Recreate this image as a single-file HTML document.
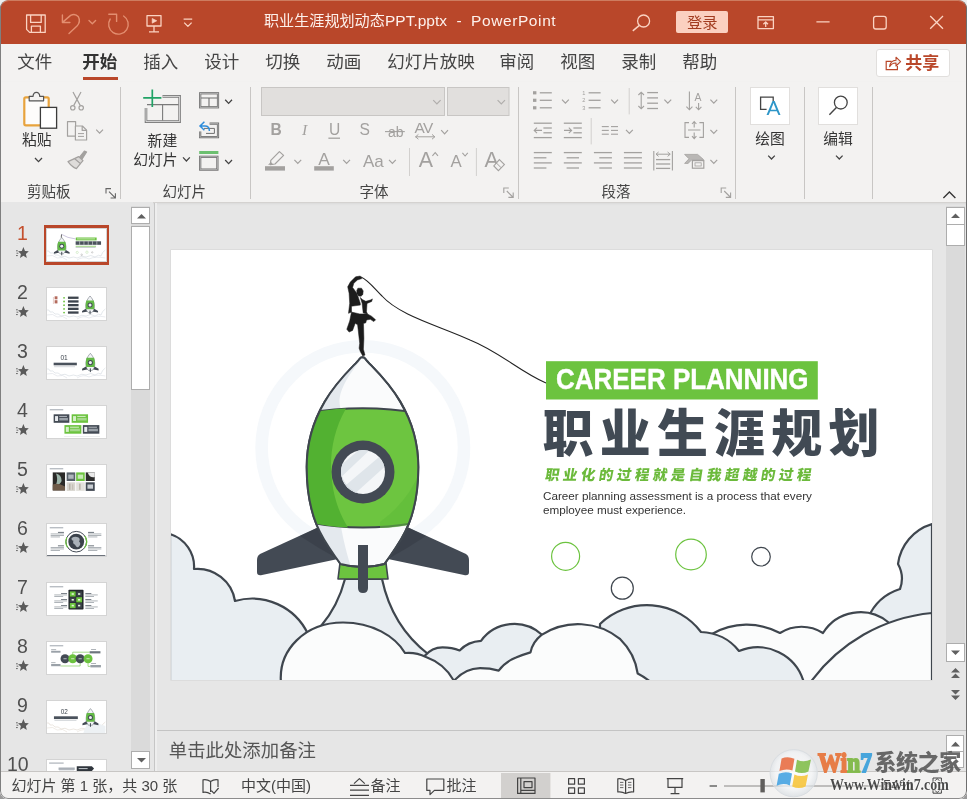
<!DOCTYPE html>
<html lang="zh-CN">
<head>
<meta charset="utf-8">
<title>职业生涯规划动态PPT.pptx - PowerPoint</title>
<style>
*{box-sizing:border-box;margin:0;padding:0}
html,body{width:967px;height:799px;overflow:hidden;background:linear-gradient(#eeeeee 0,#eeeeee 400px,#9a9a9a 400px,#9a9a9a 100%)}
body{font-family:"Liberation Sans","Noto Sans CJK SC",sans-serif;color:#444;position:relative}
#win{position:absolute;left:0;top:0;width:967px;height:799px;overflow:hidden;background:#e6e6e6;border-radius:8px;will-change:transform}
.abs{position:absolute}
.t{position:absolute;white-space:nowrap;line-height:1}
svg{position:absolute;overflow:visible}
/* title bar */
#title{position:absolute;left:0;top:0;width:967px;height:44px;background:#b9472a;border-radius:9px 9px 0 0;box-shadow:inset 0 1px 0 #cd7c60}
#title .t{color:#fdf1ec;font-size:15.5px}
/* tabs */
#tabs{position:absolute;left:0;top:44px;width:967px;height:38px;background:#f3f2f1}
#tabs .t{font-size:17.5px;color:#444;top:9.7px;margin-left:-.7px}
/* ribbon */
#ribbon{position:absolute;left:0;top:82px;width:967px;height:120.5px;background:#f3f2f1;border-bottom:1px solid #d4d2d0;box-shadow:0 1px 2px rgba(0,0,0,.06)}
#ribbon .lbl{font-size:14.5px;color:#444}
.sep{position:absolute;width:1px;background:#c8c6c4}
/* panes */
#thumbs{position:absolute;left:0;top:202px;width:153px;height:569px;background:#e6e6e6}
#status{position:absolute;left:0;top:771px;width:967px;height:28px;background:#f3f2f1;border-top:1px solid #c8c6c4}
#status .t{font-size:15px;color:#444;top:5.8px}
.num{font-size:19.5px;font-family:"Liberation Sans",sans-serif}
.th{width:58.4px;height:32.8px;background:#fff;outline:1px solid #d4d4d4;overflow:hidden}
.sbb{background:#fff;border:1px solid #adadad}
#ribbon .big{font-size:14.8px;color:#333}
</style>
</head>
<body>
<div id="win">

<!-- TITLE BAR -->
<div id="title">
<svg width="967" height="43" viewBox="0 0 967 43" style="left:0;top:0">
<g fill="none" stroke="#fbd3c2" stroke-width="1.3" stroke-linejoin="round">
<path d="M26.6,15 H45.2 V32.4 H29.6 L26.6,29.4 Z"/><path d="M30.6,15 V22.4 H41.2 V15 M31.4,32.4 V26.2 H40.4 V32.4"/>
<path d="M147,15.6 H161 V26 H147 Z M154,26 V31.6 M149,31.8 H159"/><path d="M152.2,18.4 L156.8,20.8 L152.2,23.2 Z" fill="#fbd3c2" stroke-width=".6"/>
<path d="M183.6,19.2 H192.2"/><path d="M184.2,22.6 L187.9,26.4 L191.6,22.6" />
<circle cx="643.6" cy="21" r="6"/><path d="M639.4,25.4 L632.8,30.8" stroke-width="1.5"/>
<rect x="758" y="16.6" width="15.4" height="12"/><path d="M758,19.8 H773.4 M765.7,27 V22 M763.4,24.2 L765.7,22 L768,24.2"/>
<path d="M816.4,21.8 H829.6"/>
<rect x="873.6" y="16.4" width="12.6" height="12.6" rx="2.2"/>
<path d="M930.2,16 L943,28.8 M943,16 L930.2,28.8"/>
</g>
<g fill="none" stroke="#e38e70" stroke-width="1.4" stroke-linecap="round" stroke-linejoin="round">
<path d="M62.4,15 V22.5 H69.9 M62.8,22.1 L70.6,15.4 Q75.2,13 78.4,16.8 Q81,21.4 77,26 L69,33.6"/>
<path d="M89,20.6 L92.3,23.8 L95.6,20.6"/>
<path d="M108.8,14.2 H116.6 V21.4 M123.6,16 A9.8,9.8 0 1 1 110.2,19"/>
</g>
</svg>
  <div class="t" style="left:264px;top:13px;font-size:15.1px">职业生涯规划动态</div>
  <div class="t" style="left:385px;top:13px;font-size:15.5px">PPT.pptx</div>
  <div class="t" style="left:456.6px;top:13px;font-size:15.5px">-</div>
  <div class="t" style="left:471px;top:13px;font-size:15.5px;letter-spacing:.6px">PowerPoint</div>
  <div class="abs" style="left:676px;top:11.4px;width:52.4px;height:22px;background:#fbd0c0;border-radius:2px"></div>
  <div class="t" style="left:687px;top:14.6px;color:#a23c20;font-size:15.3px">登录</div>
</div>

<!-- TABS -->
<div id="tabs">
  <div class="t" style="left:18px">文件</div>
  <div class="t" style="left:83px;font-weight:700;color:#333">开始</div>
  <div class="abs" style="left:82.6px;top:32.7px;width:35.4px;height:3.4px;background:#b9472a"></div>
  <div class="t" style="left:144px">插入</div>
  <div class="t" style="left:205px">设计</div>
  <div class="t" style="left:266px">切换</div>
  <div class="t" style="left:327px">动画</div>
  <div class="t" style="left:388px">幻灯片放映</div>
  <div class="t" style="left:500px">审阅</div>
  <div class="t" style="left:561px">视图</div>
  <div class="t" style="left:622px">录制</div>
  <div class="t" style="left:683px">帮助</div>
  <div class="abs" style="left:875.6px;top:4.6px;width:74.8px;height:28.8px;background:#fff;border:1px solid #e1dfdd;border-radius:3px"></div>
  <svg style="left:884px;top:11px" width="18" height="16" viewBox="884 55 18 16"><path d="M891.6,61.4 H886.2 V69.6 H897.4 V66" fill="none" stroke="#b9472a" stroke-width="1.2"/><path d="M889.6,66.6 Q890.4,60.4 896,60.2 V57.2 L900.6,61.6 L896,66 V63 Q892,62.8 889.6,66.6 Z" fill="#f3f2f1" stroke="#b9472a" stroke-width="1.1" stroke-linejoin="round"/></svg>
  <div class="t" style="left:906px;top:10.8px;font-weight:700;color:#b9472a;font-size:17px">共享</div>
</div>

<!-- RIBBON -->
<div id="ribbon">
<div class="sep" style="left:120px;top:5px;height:112px"></div><div class="sep" style="left:250px;top:5px;height:112px"></div><div class="sep" style="left:518px;top:5px;height:112px"></div><div class="sep" style="left:735px;top:5px;height:112px"></div><div class="sep" style="left:803.5px;top:5px;height:112px"></div><div class="sep" style="left:871.5px;top:5px;height:112px"></div>
<svg id="rbsvg" width="967" height="120" viewBox="0 82 967 120" style="left:0;top:0"><rect x="24.3" y="97.3" width="24.4" height="28" rx="1.5" fill="#fdfcfb" stroke="#e8a33d" stroke-width="2.2"/>
<path d="M29.2,100.8 V96.4 H33 Q33.4,92.4 36.4,92.4 Q39.4,92.4 39.8,96.4 H43.6 V100.8 Z" fill="#f3f2f1" stroke="#555" stroke-width="1.2" stroke-linejoin="round"/>
<rect x="40.4" y="107.4" width="16.2" height="20.8" fill="#fff" stroke="#3b3b3b" stroke-width="1.3"/>
<path d="M35,158 l3.5,3.6 l3.5,-3.6" fill="none" stroke="#444444" stroke-width="1.3"/>
<g fill="none" stroke="#a3a19f" stroke-width="1.2"><path d="M73,92 L80.2,105.4 M81,92 L73.8,105.4"/><circle cx="72.8" cy="107.8" r="2.2"/><circle cx="81.2" cy="107.8" r="2.2"/></g>
<g fill="#f3f2f1" stroke="#a3a19f" stroke-width="1.2" stroke-linejoin="round"><path d="M67.5,121.6 H75.6 V136.2 H67.5 Z"/><path d="M75.4,126 H82.4 L86.6,130.2 V140 H75.4 Z"/><path d="M82.2,126 V130.4 H86.6" fill="none"/><path d="M78,133.6 H84 M78,136.4 H84" fill="none" stroke-width="1"/></g>
<path d="M96.2,129.6 l3.4,3.6 l3.4,-3.6" fill="none" stroke="#a3a19f" stroke-width="1.2"/>
<g fill="none" stroke="#a3a19f" stroke-width="1.2" stroke-linejoin="round"><path d="M86.6,152 L84.4,151 L79.4,157.4 L81.8,159.4 Z" fill="#a3a19f"/><path d="M78.6,156.6 L83,160.6 L80.4,163.6 L74.4,158.6 Z" fill="#d8d6d4"/><path d="M74.4,158.6 L68,161.6 Q72,167 76.4,168.6 L80.4,163.6 Z" fill="#dedcda"/></g>
<path d="M106,193.6 v-5 h5 M109,191.6 l6,6 M115.4,193.2 v4.8 h-4.8" fill="none" stroke="#666" stroke-width="1.1"/>
<g fill="none" stroke="#7a7a7a"><path d="M162.5,96.4 H179.6 V121.6 H146 V108" stroke-width="2.6"/><path d="M162.5,96.4 H179.6 V121.6 H146 V108" stroke="#f3f2f1" stroke-width=".8"/><path d="M147,104.6 H178.6 M162.6,104.6 V120.6" stroke-width="1.1"/></g>
<path d="M143.2,97.8 H161.4 M152.3,89.4 V107" stroke="#21a366" stroke-width="1.7" fill="none"/>
<path d="M183,157.4 l3.4,3.6 l3.4,-3.6" fill="none" stroke="#444444" stroke-width="1.3"/>
<g fill="none" stroke="#6e6e6e"><rect x="200.2" y="93.3" width="17.8" height="14" stroke-width="2.2"/><rect x="200.2" y="93.3" width="17.8" height="14" stroke="#cfcfcf" stroke-width=".6"/><path d="M201,98 H217.4 M209,98 V106.6" stroke-width="1.1"/></g>
<path d="M225.2,99.8 l3.4,3.6 l3.4,-3.6" fill="none" stroke="#444444" stroke-width="1.3"/>
<g fill="none" stroke="#6e6e6e"><path d="M209.6,123.6 H218 V137.2 H200.2 V131.6" stroke-width="2.2"/><path d="M209.6,123.6 H218 V137.2 H200.2 V131.6" stroke="#cfcfcf" stroke-width=".6"/><path d="M204,128.4 H214.4 V133.4 H206" stroke-width="1"/></g>
<path d="M204.4,121.8 L200,126 L204.4,130.2 M200.4,126 H205 Q209.4,126 209.4,131" fill="none" stroke="#2e8ddb" stroke-width="1.5"/>
<rect x="199.2" y="151" width="19.2" height="3" fill="#6cc070"/>
<g fill="none" stroke="#6e6e6e"><rect x="200.2" y="156.8" width="17.2" height="12.8" stroke-width="2.2"/><rect x="200.2" y="156.8" width="17.2" height="12.8" stroke="#cfcfcf" stroke-width=".6"/></g>
<path d="M225.2,160 l3.4,3.6 l3.4,-3.6" fill="none" stroke="#444444" stroke-width="1.3"/>
<rect x="261.5" y="87.5" width="183" height="28" fill="#e1dfdd" stroke="#c8c6c4" stroke-width="1"/>
<rect x="447.5" y="87.5" width="61.5" height="28" fill="#e1dfdd" stroke="#c8c6c4" stroke-width="1"/>
<path d="M433.2,100.2 l3.7,3.8 l3.7,-3.8" fill="none" stroke="#b0aeac" stroke-width="1.2"/>
<path d="M497.6,100.2 l3.7,3.8 l3.7,-3.8" fill="none" stroke="#b0aeac" stroke-width="1.2"/>
<g fill="#a3a19f" font-family="Liberation Sans,sans-serif"><text x="270.4" y="135.4" font-size="15.6" font-weight="700">B</text><text x="302" y="135.4" font-size="15.6" font-style="italic" font-family="Liberation Serif,serif">I</text><text x="329" y="135.4" font-size="15.6">U</text><text x="359.6" y="135.4" font-size="15.6">S</text><text x="388" y="136.6" font-size="14">ab</text><text x="414.6" y="133" font-size="15.4" letter-spacing="-.8">AV</text><text x="318.2" y="164.6" font-size="17.4">A</text><text x="363" y="167.4" font-size="17">Aa</text><text x="418.8" y="167.4" font-size="21.4">A</text><text x="450.4" y="167.4" font-size="16.8">A</text><text x="484.6" y="167.4" font-size="21.4">A</text></g>
<path d="M328.4,138.2 H340" stroke="#a3a19f" stroke-width="1.3"/>
<path d="M385,131.6 H404.8" stroke="#a3a19f" stroke-width="1.1"/>
<path d="M415.4,136.8 H435 M418.4,134.4 L415.6,136.8 L418.4,139.2 M432,134.4 L434.8,136.8 L432,139.2" fill="none" stroke="#a3a19f" stroke-width="1"/>
<path d="M441.2,130.2 l3.4,3.6 l3.4,-3.6" fill="none" stroke="#a3a19f" stroke-width="1.2"/>
<path d="M279.4,151.6 L283.6,155.4 L275,164 L270.4,164.6 L270.8,160.4 Z" fill="none" stroke="#a3a19f" stroke-width="1.2" stroke-linejoin="round"/><path d="M268,164.8 L271,162 L273.4,164.8 Z" fill="#a3a19f"/>
<rect x="265" y="166.2" width="20" height="4.4" fill="#a3a19f"/><rect x="314.2" y="166.2" width="19.6" height="4.4" fill="#a3a19f"/>
<path d="M294.4,159.8 l3.4,3.6 l3.4,-3.6" fill="none" stroke="#a3a19f" stroke-width="1.2"/>
<path d="M343.2,159.8 l3.4,3.6 l3.4,-3.6" fill="none" stroke="#a3a19f" stroke-width="1.2"/>
<path d="M389,159.8 l3.4,3.6 l3.4,-3.6" fill="none" stroke="#a3a19f" stroke-width="1.2"/>
<path d="M409.5,148 V176 M476.4,148 V176" stroke="#d2d0ce" stroke-width="1"/>
<path d="M432.4,155.8 l2.8,-3.2 l2.8,3.2 M462.4,152.8 l2.7,3.2 l2.7,-3.2" fill="none" stroke="#a3a19f" stroke-width="1.1"/>
<path d="M499.4,159.6 L504.4,164.6 L498.4,170.6 L493.8,166 Z" fill="#f3f2f1" stroke="#a3a19f" stroke-width="1.1"/><path d="M496.4,163 L501.2,167.8" stroke="#a3a19f" stroke-width="1"/>
<path d="M503.8,193 v-5 h5 M506.8,191 l6,6 M513.2,192.6 v4.8 h-4.8" fill="none" stroke="#a3a19f" stroke-width="1.1"/>
<rect x="533" y="91.2" width="3.4" height="3.2" fill="#a3a19f"/>
<path d="M539.8,92.8 H551.8" stroke="#a3a19f" stroke-width="1.3"/>
<path d="M588.6,92.8 H600.6" stroke="#a3a19f" stroke-width="1.3"/>
<rect x="533" y="98.7" width="3.4" height="3.2" fill="#a3a19f"/>
<path d="M539.8,100.3 H551.8" stroke="#a3a19f" stroke-width="1.3"/>
<path d="M588.6,100.3 H600.6" stroke="#a3a19f" stroke-width="1.3"/>
<rect x="533" y="106.2" width="3.4" height="3.2" fill="#a3a19f"/>
<path d="M539.8,107.8 H551.8" stroke="#a3a19f" stroke-width="1.3"/>
<path d="M588.6,107.8 H600.6" stroke="#a3a19f" stroke-width="1.3"/>
<g fill="#a3a19f" font-family="Liberation Sans,sans-serif" font-size="5.6"><text x="582.2" y="94.8">1</text><text x="582.2" y="102.3">2</text><text x="582.2" y="109.8">3</text></g>
<path d="M562,99.6 l3.4,3.6 l3.4,-3.6" fill="none" stroke="#a3a19f" stroke-width="1.2"/>
<path d="M611.2,99.6 l3.4,3.6 l3.4,-3.6" fill="none" stroke="#a3a19f" stroke-width="1.2"/>
<path d="M629.2,88 V114.4 M591.2,118 V144.4" stroke="#d2d0ce" stroke-width="1"/>
<path d="M641.2,92.4 V108.6 M638.4,95 L641.2,92.2 L644,95 M638.4,106 L641.2,108.8 L644,106" fill="none" stroke="#a3a19f" stroke-width="1.1"/>
<path d="M647.2,92.6 H658" stroke="#a3a19f" stroke-width="1.3"/>
<path d="M647.2,97.9 H658" stroke="#a3a19f" stroke-width="1.3"/>
<path d="M647.2,103.2 H658" stroke="#a3a19f" stroke-width="1.3"/>
<path d="M647.2,108.5 H658" stroke="#a3a19f" stroke-width="1.3"/>
<path d="M664.4,99.6 l3.4,3.6 l3.4,-3.6" fill="none" stroke="#a3a19f" stroke-width="1.2"/>
<path d="M689.4,91.4 V109.6 M686.4,106.6 L689.4,109.8 L692.4,106.6 M698.6,103 V109.6 M695.8,106.8 L698.6,109.8 L701.4,106.8" fill="none" stroke="#a3a19f" stroke-width="1.1"/><text x="694.6" y="100.6" font-size="10.4" fill="#a3a19f" font-family="Liberation Sans,sans-serif">A</text>
<path d="M710.4,99.6 l3.4,3.6 l3.4,-3.6" fill="none" stroke="#a3a19f" stroke-width="1.2"/>
<path d="M533.8,123.2 H551.8" stroke="#a3a19f" stroke-width="1.3"/>
<path d="M533.8,137.6 H551.8" stroke="#a3a19f" stroke-width="1.3"/>
<path d="M543.4,128 H551.8" stroke="#a3a19f" stroke-width="1.3"/>
<path d="M543.4,132.8 H551.8" stroke="#a3a19f" stroke-width="1.3"/>
<path d="M563.8,123.2 H581.8" stroke="#a3a19f" stroke-width="1.3"/>
<path d="M563.8,137.6 H581.8" stroke="#a3a19f" stroke-width="1.3"/>
<path d="M573.4,128 H581.8" stroke="#a3a19f" stroke-width="1.3"/>
<path d="M573.4,132.8 H581.8" stroke="#a3a19f" stroke-width="1.3"/>
<path d="M534.4,130.4 H542 M537,127.6 L534.2,130.4 L537,133.2" fill="none" stroke="#a3a19f" stroke-width="1.1"/>
<path d="M564,130.4 H571.6 M568.8,127.6 L571.6,130.4 L568.8,133.2" fill="none" stroke="#a3a19f" stroke-width="1.1"/>
<path d="M601.8,126.6 H608.8" stroke="#a3a19f" stroke-width="1.1"/>
<path d="M611,126.6 H618" stroke="#a3a19f" stroke-width="1.1"/>
<path d="M601.8,130.4 H608.8" stroke="#a3a19f" stroke-width="1.1"/>
<path d="M611,130.4 H618" stroke="#a3a19f" stroke-width="1.1"/>
<path d="M601.8,134.2 H608.8" stroke="#a3a19f" stroke-width="1.1"/>
<path d="M611,134.2 H618" stroke="#a3a19f" stroke-width="1.1"/>
<path d="M626,129.8 l3.4,3.6 l3.4,-3.6" fill="none" stroke="#a3a19f" stroke-width="1.2"/>
<path d="M689,122.6 H685 V137.4 H689 M699.4,122.6 H703.4 V137.4 H699.4 M688,130 H700.4 M694.2,121.6 V127.6 M692,124 L694.2,121.6 L696.4,124 M694.2,132.4 V138.6 M692,136.2 L694.2,138.6 L696.4,136.2" fill="none" stroke="#a3a19f" stroke-width="1.1"/>
<path d="M710.4,129.8 l3.4,3.6 l3.4,-3.6" fill="none" stroke="#a3a19f" stroke-width="1.2"/>
<path d="M533.8,152.6 H551.8" stroke="#a3a19f" stroke-width="1.3"/>
<path d="M533.8,157.8 H546.4" stroke="#a3a19f" stroke-width="1.3"/>
<path d="M533.8,162.9 H551.8" stroke="#a3a19f" stroke-width="1.3"/>
<path d="M533.8,168 H546.4" stroke="#a3a19f" stroke-width="1.3"/>
<path d="M563.8,152.6 H581.8" stroke="#a3a19f" stroke-width="1.3"/>
<path d="M566.5999999999999,157.8 H579.0" stroke="#a3a19f" stroke-width="1.3"/>
<path d="M563.8,162.9 H581.8" stroke="#a3a19f" stroke-width="1.3"/>
<path d="M566.5999999999999,168 H579.0" stroke="#a3a19f" stroke-width="1.3"/>
<path d="M593.9,152.6 H611.9" stroke="#a3a19f" stroke-width="1.3"/>
<path d="M599.3,157.8 H611.9" stroke="#a3a19f" stroke-width="1.3"/>
<path d="M593.9,162.9 H611.9" stroke="#a3a19f" stroke-width="1.3"/>
<path d="M599.3,168 H611.9" stroke="#a3a19f" stroke-width="1.3"/>
<path d="M623.9,152.6 H641.9" stroke="#a3a19f" stroke-width="1.3"/>
<path d="M623.9,157.8 H641.9" stroke="#a3a19f" stroke-width="1.3"/>
<path d="M623.9,162.9 H641.9" stroke="#a3a19f" stroke-width="1.3"/>
<path d="M623.9,168 H641.9" stroke="#a3a19f" stroke-width="1.3"/>
<path d="M653.8,151 V170.6 M672.4,151 V170.6" stroke="#a3a19f" stroke-width="1.1"/><path d="M656,154.2 H670.2 M658.6,152 L656,154.2 L658.6,156.4 M667.6,152 L670.2,154.2 L667.6,156.4" fill="none" stroke="#a3a19f" stroke-width="1"/>
<path d="M656,159.6 H670.2" stroke="#a3a19f" stroke-width="1.3"/>
<path d="M656,164 H670.2" stroke="#a3a19f" stroke-width="1.3"/>
<path d="M656,168.4 H670.2" stroke="#a3a19f" stroke-width="1.3"/>
<path d="M684.6,154.4 H697.6 L703.6,159.6 H692 L688,163.4 H684.6 L689,158.8 Z" fill="#b9b7b5" stroke="#a3a19f" stroke-width=".8" stroke-linejoin="round"/><rect x="692.4" y="160.6" width="11.4" height="7.6" fill="#f3f2f1" stroke="#a3a19f" stroke-width="1.2"/><rect x="695" y="162.8" width="6.2" height="3.2" fill="none" stroke="#a3a19f" stroke-width=".8"/>
<path d="M710.4,159.8 l3.4,3.6 l3.4,-3.6" fill="none" stroke="#a3a19f" stroke-width="1.2"/>
<path d="M721.2,193 v-5 h5 M724.2,191 l6,6 M730.6,192.6 v4.8 h-4.8" fill="none" stroke="#a3a19f" stroke-width="1.1"/>
<rect x="750.5" y="87.5" width="39" height="37" fill="#fff" stroke="#e1dfdd"/>
<rect x="818.5" y="87.5" width="39" height="37" fill="#fff" stroke="#e1dfdd"/>
<path d="M766.6,109.4 H760.6 V97.2 H773.2 V101" fill="none" stroke="#444" stroke-width="1.3"/>
<text x="766.4" y="115.4" font-size="21" fill="#2e96c8" font-family="Liberation Sans,sans-serif">A</text>
<circle cx="840.8" cy="102.6" r="6.4" fill="none" stroke="#444" stroke-width="1.3"/><path d="M836.4,107.4 L829.4,114.8" stroke="#444" stroke-width="1.4"/>
<path d="M768.2,155.6 l3.3,3.4 l3.3,-3.4" fill="none" stroke="#444444" stroke-width="1.3"/>
<path d="M836,155.6 l3.3,3.4 l3.3,-3.4" fill="none" stroke="#444444" stroke-width="1.3"/>
<path d="M943.4,198 l6,-6 l6,6" fill="none" stroke="#333" stroke-width="1.3"/></svg>
<div class="t big" style="left:22px;top:51px">粘贴</div>
<div class="t big" style="left:147.6px;top:51.7px">新建</div>
<div class="t big" style="left:133.2px;top:70.6px">幻灯片</div>
<div class="t big" style="left:755.2px;top:49.6px">绘图</div>
<div class="t big" style="left:823.2px;top:49.6px">编辑</div>
<div class="t lbl" style="left:27px;top:103.2px">剪贴板</div>
<div class="t lbl" style="left:162.4px;top:103.2px">幻灯片</div>
<div class="t lbl" style="left:359.6px;top:103.2px">字体</div>
<div class="t lbl" style="left:601.4px;top:103.2px">段落</div>
</div>

<!-- THUMBNAILS -->
<div id="thumbs">
<div class="t num" style="left:17px;top:22.2px;color:#c4502e">1</div>
<svg class="star" style="left:15.8px;top:45.1px" width="13" height="11.400" viewBox="0 0 13 11.4"><path d="M7.4,0 L9,3.900 L12.8,4.2 L9.900,6.900 L10.8,11 L7.4,8.8 L4,11 L4.900,6.900 L2,4.2 L5.800,3.900 Z" fill="#5a5a5a"/><path d="M0,3.800h1.800 M.5,6.200h1.800 M0,8.600h1.800" stroke="#5a5a5a" stroke-width=".9"/></svg>
<div class="abs" style="left:44px;top:23.1px;width:65.2px;height:39.7px;background:#b9472a"></div>
<div class="abs th" style="left:47.4px;top:26.5px"><svg width="58.4" height="32.8" viewBox="0 0 58.3 32.8" style="left:0;top:0;overflow:hidden"><path d="M0,22 Q2,21 3,24 Q6,23 8,26 Q11,25 14,28 Q18,26 22,29 Q27,27 30,29 Q35,26 39,28 Q44,25 48,28 Q52,25 54,27 Q55,23 58.3,21" fill="none" stroke="#c9d0d8" stroke-width=".5"/><path d="M0,27 Q6,25 10,29 Q16,27 20,31 M30,31 Q36,27 42,30 Q48,27 58.3,29" fill="none" stroke="#c9d0d8" stroke-width=".4"/><g transform="translate(14.7,17.3) scale(0.98)">
<path d="M-3,3 L-8,6 L-8,7.6 L-2,6.4 Z M3,3 L8,6 L8,7.6 L2,6.4 Z" fill="#434a54"/>
<path d="M0,-9 C3.6,-5 4.6,-1 4.2,3 C3.8,5.6 2.6,7 1.8,7.6 L-1.8,7.6 C-2.6,7 -3.8,5.6 -4.2,3 C-4.6,-1 -3.6,-5 0,-9 Z" fill="#f2f4f6" stroke="#59626b" stroke-width=".5"/>
<path d="M-3.7,-4.6 L3.7,-4.6 C4.7,-1 4.5,2 3.9,4.2 L-3.9,4.2 C-4.5,2 -4.7,-1 -3.7,-4.6 Z" fill="#63b946"/>
<circle cx="0" cy="0" r="2.5" fill="#434a54"/><circle cx="0" cy="0" r="1.5" fill="#eef1f4"/>
<rect x="-.5" y="5.6" width="1" height="3.6" fill="#434a54"/>
</g><path d="M14.5,5.4 L14.2,8.6" stroke="#222" stroke-width=".7"/><path d="M14.6,5.4 Q20,9 28.8,10" fill="none" stroke="#6a5aa0" stroke-width=".35"/><rect x="28.8" y="8.5" width="20.8" height="2.9" fill="#6cc33f"/><rect x="30" y="9.5" width="18" height=".8" fill="#d9f0cd"/><rect x="28.6" y="12.3" width="25.4" height="3.5" fill="#4a525c"/><path d="M32.6,12.3v3.5 M36.9,12.3v3.5 M41.2,12.3v3.5 M45.5,12.3v3.5 M49.8,12.3v3.5" stroke="#fff" stroke-width=".5"/><rect x="28.6" y="16.8" width="20.4" height=".9" fill="#8fcf73"/><rect x="28.6" y="18.4" width="20" height=".5" fill="#9aa0a6"/><circle cx="30.2" cy="23.4" r="1.1" fill="none" stroke="#8fcf73" stroke-width=".3"/><circle cx="39.9" cy="23.2" r="1.2" fill="none" stroke="#8fcf73" stroke-width=".3"/><circle cx="45.2" cy="23.4" r=".7" fill="none" stroke="#777" stroke-width=".3"/><circle cx="34.6" cy="25.8" r=".8" fill="none" stroke="#777" stroke-width=".3"/></svg></div>
<div class="t num" style="left:17px;top:81.2px;color:#505050">2</div>
<svg class="star" style="left:15.8px;top:104.1px" width="13" height="11.400" viewBox="0 0 13 11.4"><path d="M7.4,0 L9,3.900 L12.8,4.2 L9.900,6.900 L10.8,11 L7.4,8.8 L4,11 L4.900,6.900 L2,4.2 L5.800,3.900 Z" fill="#5a5a5a"/><path d="M0,3.800h1.800 M.5,6.200h1.800 M0,8.600h1.800" stroke="#5a5a5a" stroke-width=".9"/></svg>
<div class="abs th" style="left:47.4px;top:85.5px"><svg width="58.4" height="32.8" viewBox="0 0 58.3 32.8" style="left:0;top:0;overflow:hidden"><path d="M0,22 Q2,21 3,24 Q6,23 8,26 Q11,25 14,28 Q18,26 22,29 Q27,27 30,29 Q35,26 39,28 Q44,25 48,28 Q52,25 54,27 Q55,23 58.3,21" fill="none" stroke="#c9d0d8" stroke-width=".5"/><path d="M0,27 Q6,25 10,29 Q16,27 20,31 M30,31 Q36,27 42,30 Q48,27 58.3,29" fill="none" stroke="#c9d0d8" stroke-width=".4"/><rect x="7.6" y="8.3" width="2.8" height="3" fill="#b46a5c"/><rect x="7.6" y="12.2" width="2.8" height="3.2" fill="#b46a5c"/><rect x="5.9" y="9" width=".6" height="7" fill="#d9b0a8"/><circle cx="17" cy="9.8" r=".9" fill="#6cc33f"/><rect x="20.9" y="8.6" width="10.6" height="2.3" fill="#3d444d"/><circle cx="17" cy="13.5" r=".9" fill="#6cc33f"/><rect x="20.9" y="12.3" width="10.6" height="2.3" fill="#3d444d"/><circle cx="17" cy="17.200000000000003" r=".9" fill="#6cc33f"/><rect x="20.9" y="16.0" width="10.6" height="2.3" fill="#3d444d"/><circle cx="17" cy="20.900000000000002" r=".9" fill="#6cc33f"/><rect x="20.9" y="19.700000000000003" width="10.6" height="2.3" fill="#3d444d"/><circle cx="17" cy="24.6" r=".9" fill="#6cc33f"/><rect x="20.9" y="23.4" width="10.6" height="2.3" fill="#3d444d"/><g transform="translate(43,17) scale(1.0)">
<path d="M-3,3 L-8,6 L-8,7.6 L-2,6.4 Z M3,3 L8,6 L8,7.6 L2,6.4 Z" fill="#434a54"/>
<path d="M0,-9 C3.6,-5 4.6,-1 4.2,3 C3.8,5.6 2.6,7 1.8,7.6 L-1.8,7.6 C-2.6,7 -3.8,5.6 -4.2,3 C-4.6,-1 -3.6,-5 0,-9 Z" fill="#f2f4f6" stroke="#59626b" stroke-width=".5"/>
<path d="M-3.7,-4.6 L3.7,-4.6 C4.7,-1 4.5,2 3.9,4.2 L-3.9,4.2 C-4.5,2 -4.7,-1 -3.7,-4.6 Z" fill="#63b946"/>
<circle cx="0" cy="0" r="2.5" fill="#434a54"/><circle cx="0" cy="0" r="1.5" fill="#eef1f4"/>
<rect x="-.5" y="5.6" width="1" height="3.6" fill="#434a54"/>
</g></svg></div>
<div class="t num" style="left:17px;top:140.2px;color:#505050">3</div>
<svg class="star" style="left:15.8px;top:163.1px" width="13" height="11.400" viewBox="0 0 13 11.4"><path d="M7.4,0 L9,3.900 L12.8,4.2 L9.900,6.900 L10.8,11 L7.4,8.8 L4,11 L4.900,6.900 L2,4.2 L5.800,3.900 Z" fill="#5a5a5a"/><path d="M0,3.800h1.800 M.5,6.200h1.800 M0,8.600h1.800" stroke="#5a5a5a" stroke-width=".9"/></svg>
<div class="abs th" style="left:47.4px;top:144.5px"><svg width="58.4" height="32.8" viewBox="0 0 58.3 32.8" style="left:0;top:0;overflow:hidden"><path d="M0,22 Q2,21 3,24 Q6,23 8,26 Q11,25 14,28 Q18,26 22,29 Q27,27 30,29 Q35,26 39,28 Q44,25 48,28 Q52,25 54,27 Q55,23 58.3,21" fill="none" stroke="#c9d0d8" stroke-width=".5"/><path d="M0,27 Q6,25 10,29 Q16,27 20,31 M30,31 Q36,27 42,30 Q48,27 58.3,29" fill="none" stroke="#c9d0d8" stroke-width=".4"/><text x="13.4" y="13.5" font-size="6.6" fill="#3d444d" font-family="Liberation Sans,sans-serif">01</text><rect x="6.6" y="15.7" width="23.2" height="2.6" fill="#4a525c"/><rect x="7" y="19.6" width="21" height=".5" fill="#b0b6bc"/><g transform="translate(43.3,15.6) scale(1.03)">
<path d="M-3,3 L-8,6 L-8,7.6 L-2,6.4 Z M3,3 L8,6 L8,7.6 L2,6.4 Z" fill="#434a54"/>
<path d="M0,-9 C3.6,-5 4.6,-1 4.2,3 C3.8,5.6 2.6,7 1.8,7.6 L-1.8,7.6 C-2.6,7 -3.8,5.6 -4.2,3 C-4.6,-1 -3.6,-5 0,-9 Z" fill="#f2f4f6" stroke="#59626b" stroke-width=".5"/>
<path d="M-3.7,-4.6 L3.7,-4.6 C4.7,-1 4.5,2 3.9,4.2 L-3.9,4.2 C-4.5,2 -4.7,-1 -3.7,-4.6 Z" fill="#63b946"/>
<circle cx="0" cy="0" r="2.5" fill="#434a54"/><circle cx="0" cy="0" r="1.5" fill="#eef1f4"/>
<rect x="-.5" y="5.6" width="1" height="3.6" fill="#434a54"/>
</g></svg></div>
<div class="t num" style="left:17px;top:199.2px;color:#505050">4</div>
<svg class="star" style="left:15.8px;top:222.1px" width="13" height="11.400" viewBox="0 0 13 11.4"><path d="M7.4,0 L9,3.900 L12.8,4.2 L9.900,6.900 L10.8,11 L7.4,8.8 L4,11 L4.900,6.900 L2,4.2 L5.800,3.900 Z" fill="#5a5a5a"/><path d="M0,3.800h1.800 M.5,6.200h1.800 M0,8.600h1.800" stroke="#5a5a5a" stroke-width=".9"/></svg>
<div class="abs th" style="left:47.4px;top:203.5px"><svg width="58.4" height="32.8" viewBox="0 0 58.3 32.8" style="left:0;top:0;overflow:hidden"><rect x="2.7" y="3" width="13.5" height="1.4" fill="#b9bec4"/><rect x="6.6" y="8.3" width="15.7" height="8.5" fill="#434a54"/><rect x="8.0" y="10.100000000000001" width="3" height="4.9" fill="#e8ebee"/><rect x="12.2" y="9.9" width="7.699999999999999" height="1" fill="#b5bbc1"/><rect x="12.2" y="11.9" width="8.7" height="2.6" fill="#9aa1a8"/><rect x="24.6" y="8.3" width="16.4" height="8.5" fill="#6cc33f"/><rect x="26.0" y="10.100000000000001" width="3" height="4.9" fill="#d6efca"/><rect x="30.200000000000003" y="9.9" width="8.399999999999999" height="1" fill="#d6efca"/><rect x="30.200000000000003" y="11.9" width="9.399999999999999" height="2.6" fill="#a5d98c"/><rect x="17.4" y="19.1" width="16.9" height="8.6" fill="#6cc33f"/><rect x="18.799999999999997" y="20.900000000000002" width="3" height="5.0" fill="#d6efca"/><rect x="23.0" y="20.700000000000003" width="8.899999999999999" height="1" fill="#d6efca"/><rect x="23.0" y="22.700000000000003" width="9.899999999999999" height="2.6" fill="#a5d98c"/><rect x="35.8" y="19.1" width="16.5" height="8.6" fill="#434a54"/><rect x="37.199999999999996" y="20.900000000000002" width="3" height="5.0" fill="#e8ebee"/><rect x="41.4" y="20.700000000000003" width="8.5" height="1" fill="#b5bbc1"/><rect x="41.4" y="22.700000000000003" width="9.5" height="2.6" fill="#9aa1a8"/><rect x="17" y="30.2" width="36" height=".4" fill="#d5d9dd"/></svg></div>
<div class="t num" style="left:17px;top:258.2px;color:#505050">5</div>
<svg class="star" style="left:15.8px;top:281.1px" width="13" height="11.400" viewBox="0 0 13 11.4"><path d="M7.4,0 L9,3.900 L12.8,4.2 L9.900,6.900 L10.8,11 L7.4,8.8 L4,11 L4.900,6.900 L2,4.2 L5.800,3.900 Z" fill="#5a5a5a"/><path d="M0,3.800h1.800 M.5,6.200h1.800 M0,8.600h1.800" stroke="#5a5a5a" stroke-width=".9"/></svg>
<div class="abs th" style="left:47.4px;top:262.5px"><svg width="58.4" height="32.8" viewBox="0 0 58.3 32.8" style="left:0;top:0;overflow:hidden"><rect x="2.7" y="3" width="13.5" height="1.4" fill="#b9bec4"/><rect x="5.7" y="7.4" width="12.3" height="18" fill="#2b2a28"/><path d="M9,8.4 Q14.6,9.6 14.6,16 Q12.4,20.6 9,19.4 Q11.2,14 9,8.4Z" fill="#9db5aa"/><path d="M5.7,19.6 Q11,17.4 18,21.6 L18,25.4 L5.7,25.4Z" fill="#6e5a48"/><rect x="19.6" y="7.4" width="8.6" height="8.6" fill="#59626b"/><rect x="29.1" y="7.4" width="8.6" height="8.6" fill="#6cc33f"/><rect x="38.7" y="7.4" width="9" height="8.6" fill="#2c2c2c"/><path d="M40.6,7.4 L47.7,7.4 L47.7,12 Q43,13.4 40.6,7.4Z" fill="#e9e9e9"/><rect x="19.6" y="17.3" width="8.6" height="8.6" fill="#d8d5cf"/><rect x="29.1" y="17.3" width="8.6" height="8.6" fill="#e3e1dc"/><rect x="38.7" y="17.3" width="9" height="8.6" fill="#434a54"/><rect x="21.2" y="9.6" width="5.4" height="4.2" fill="#aeb5bb"/><rect x="30.7" y="9.6" width="5.4" height="4.2" fill="#c6e8b5"/><rect x="40.4" y="19.5" width="5.6" height="4.2" fill="#c9ced3"/><rect x="22" y="18.6" width="1.4" height="6.2" fill="#b9b4aa"/><rect x="25" y="19.4" width="1.2" height="5.4" fill="#c4bfb5"/><rect x="32" y="18.6" width="1.6" height="6.2" fill="#bdb8ae"/></svg></div>
<div class="t num" style="left:17px;top:317.2px;color:#505050">6</div>
<svg class="star" style="left:15.8px;top:340.1px" width="13" height="11.400" viewBox="0 0 13 11.4"><path d="M7.4,0 L9,3.900 L12.8,4.2 L9.900,6.900 L10.8,11 L7.4,8.8 L4,11 L4.900,6.900 L2,4.2 L5.800,3.900 Z" fill="#5a5a5a"/><path d="M0,3.800h1.800 M.5,6.200h1.800 M0,8.600h1.800" stroke="#5a5a5a" stroke-width=".9"/></svg>
<div class="abs th" style="left:47.4px;top:321.5px"><svg width="58.4" height="32.8" viewBox="0 0 58.3 32.8" style="left:0;top:0;overflow:hidden"><rect x="2.7" y="3" width="13.5" height="1.4" fill="#b9bec4"/><circle cx="29.2" cy="17.7" r="10.3" fill="none" stroke="#434a54" stroke-width="1"/><path d="M20.6,23.4 A10.3,10.3 0 0 1 19.8,13.4" fill="none" stroke="#6cc33f" stroke-width="1.2"/><path d="M37.8,12 A10.3,10.3 0 0 1 37.4,24" fill="none" stroke="#6cc33f" stroke-width="1.2"/><circle cx="29.2" cy="17.7" r="7.9" fill="#3b424b"/><path d="M24.6,14 Q28,11.6 31.4,13.4 Q33.6,15 32,17.4 Q34.8,19.6 31.4,23 Q29.2,24 28,20.8 Q25.2,19.6 26.4,16.8 Q24,16.2 24.6,14Z" fill="#aab1b8"/><rect x="10.900000000000002" y="7.9" width="6" height=".9" fill="#5d656e"/><rect x="3.6" y="9.6" width="13.3" height="0.7" fill="#8d949b"/><rect x="3.6" y="11.1" width="13.3" height="0.7" fill="#8d949b"/><rect x="3.6" y="12.6" width="9.31" height="0.7" fill="#8d949b"/><rect x="10.900000000000002" y="21.4" width="6" height=".9" fill="#5d656e"/><rect x="3.6" y="23.099999999999998" width="13.3" height="0.7" fill="#8d949b"/><rect x="3.6" y="24.599999999999998" width="13.3" height="0.7" fill="#8d949b"/><rect x="3.6" y="26.099999999999998" width="9.31" height="0.7" fill="#8d949b"/><rect x="41" y="7.9" width="6" height=".9" fill="#5d656e"/><rect x="41" y="9.6" width="13.3" height="0.7" fill="#8d949b"/><rect x="41" y="11.1" width="13.3" height="0.7" fill="#8d949b"/><rect x="41" y="12.6" width="9.31" height="0.7" fill="#8d949b"/><rect x="41" y="21.4" width="6" height=".9" fill="#5d656e"/><rect x="41" y="23.099999999999998" width="13.3" height="0.7" fill="#8d949b"/><rect x="41" y="24.599999999999998" width="13.3" height="0.7" fill="#8d949b"/><rect x="41" y="26.099999999999998" width="9.31" height="0.7" fill="#8d949b"/><rect x="0" y="31.2" width="58.3" height="1.6" fill="#4a525c"/></svg></div>
<div class="t num" style="left:17px;top:376.2px;color:#505050">7</div>
<svg class="star" style="left:15.8px;top:399.1px" width="13" height="11.400" viewBox="0 0 13 11.4"><path d="M7.4,0 L9,3.900 L12.8,4.2 L9.900,6.900 L10.8,11 L7.4,8.8 L4,11 L4.900,6.900 L2,4.2 L5.800,3.900 Z" fill="#5a5a5a"/><path d="M0,3.800h1.800 M.5,6.200h1.800 M0,8.600h1.800" stroke="#5a5a5a" stroke-width=".9"/></svg>
<div class="abs th" style="left:47.4px;top:380.5px"><svg width="58.4" height="32.8" viewBox="0 0 58.3 32.8" style="left:0;top:0;overflow:hidden"><rect x="2.7" y="3" width="13.5" height="1.4" fill="#b9bec4"/><rect x="21.4" y="6.8" width="15.1" height="19.8" rx=".8" fill="#23272c"/><rect x="22.8" y="8.4" width="5.8" height="5.2" fill="#6cc33f"/><rect x="24.6" y="10.2" width="2.2" height="1.6" fill="#e4f4dc"/><rect x="29.200000000000003" y="8.4" width="5.8" height="5.2" fill="#3a4048"/><rect x="31.0" y="10.2" width="2.2" height="1.6" fill="#e4f4dc"/><rect x="22.8" y="14.2" width="5.8" height="5.2" fill="#3a4048"/><rect x="24.6" y="16.0" width="2.2" height="1.6" fill="#e4f4dc"/><rect x="29.200000000000003" y="14.2" width="5.8" height="5.2" fill="#6cc33f"/><rect x="31.0" y="16.0" width="2.2" height="1.6" fill="#e4f4dc"/><rect x="22.8" y="20.0" width="5.8" height="5.2" fill="#6cc33f"/><rect x="24.6" y="21.799999999999997" width="2.2" height="1.6" fill="#e4f4dc"/><rect x="29.200000000000003" y="20.0" width="5.8" height="5.2" fill="#3a4048"/><rect x="31.0" y="21.799999999999997" width="2.2" height="1.6" fill="#e4f4dc"/><rect x="7.2" y="11.6" width="12.8" height="0.7" fill="#8d949b"/><rect x="7.2" y="13.1" width="8.959999999999999" height="0.7" fill="#8d949b"/><rect x="14" y="10.2" width="6" height=".8" fill="#5d656e"/><rect x="7.2" y="17.6" width="12.8" height="0.7" fill="#8d949b"/><rect x="7.2" y="19.1" width="8.959999999999999" height="0.7" fill="#8d949b"/><rect x="14" y="16.2" width="6" height=".8" fill="#5d656e"/><rect x="7.2" y="23.6" width="12.8" height="0.7" fill="#8d949b"/><rect x="7.2" y="25.1" width="8.959999999999999" height="0.7" fill="#8d949b"/><rect x="14" y="22.2" width="6" height=".8" fill="#5d656e"/><rect x="38.3" y="11.6" width="12.4" height="0.7" fill="#8d949b"/><rect x="38.3" y="13.1" width="8.68" height="0.7" fill="#8d949b"/><rect x="38.3" y="10.2" width="6" height=".8" fill="#5d656e"/><rect x="38.3" y="17.6" width="12.4" height="0.7" fill="#8d949b"/><rect x="38.3" y="19.1" width="8.68" height="0.7" fill="#8d949b"/><rect x="38.3" y="16.2" width="6" height=".8" fill="#5d656e"/><rect x="38.3" y="23.6" width="12.4" height="0.7" fill="#8d949b"/><rect x="38.3" y="25.1" width="8.68" height="0.7" fill="#8d949b"/><rect x="38.3" y="22.2" width="6" height=".8" fill="#5d656e"/></svg></div>
<div class="t num" style="left:17px;top:435.2px;color:#505050">8</div>
<svg class="star" style="left:15.8px;top:458.1px" width="13" height="11.400" viewBox="0 0 13 11.4"><path d="M7.4,0 L9,3.900 L12.8,4.2 L9.900,6.900 L10.8,11 L7.4,8.8 L4,11 L4.900,6.900 L2,4.2 L5.800,3.900 Z" fill="#5a5a5a"/><path d="M0,3.800h1.800 M.5,6.200h1.800 M0,8.600h1.800" stroke="#5a5a5a" stroke-width=".9"/></svg>
<div class="abs th" style="left:47.4px;top:439.5px"><svg width="58.4" height="32.8" viewBox="0 0 58.3 32.8" style="left:0;top:0;overflow:hidden"><rect x="2.7" y="3" width="13.5" height="1.4" fill="#b9bec4"/><path d="M25.7,16.8 L25.7,10.2 L42.6,10.2 M33.1,16.8 L33.1,24 L13.5,24 M41,16.8 L41,24.4 L43.3,24.4" fill="none" stroke="#6cc33f" stroke-width=".6"/><circle cx="18" cy="16.8" r="4.5" fill="#434a54"/><circle cx="25.7" cy="16.8" r="4.5" fill="#6cc33f"/><circle cx="33.1" cy="16.8" r="4.5" fill="#434a54"/><circle cx="41" cy="16.8" r="4.5" fill="#6cc33f"/><rect x="16.4" y="16.4" width="3.2" height=".8" fill="#cfd4d9"/><rect x="24.1" y="16.4" width="3.2" height=".8" fill="#e4f4dc"/><rect x="31.5" y="16.4" width="3.2" height=".8" fill="#cfd4d9"/><rect x="39.4" y="16.4" width="3.2" height=".8" fill="#e4f4dc"/><rect x="4.1" y="7.4" width="5" height=".7" fill="#8d949b"/><rect x="4.1" y="8.8" width="9.4" height="1.9" fill="#9aa1a8"/><rect x="4.1" y="20.4" width="4.4" height=".7" fill="#8d949b"/><rect x="4.1" y="22" width="9.4" height="2.2" fill="#9aa1a8"/><rect x="44" y="7" width="5" height=".7" fill="#8d949b"/><rect x="42.6" y="9.2" width="10.8" height="2.2" fill="#6d757d"/><rect x="44" y="21.2" width="5" height=".7" fill="#8d949b"/><rect x="43.3" y="23" width="10.6" height="2.4" fill="#9aa1a8"/></svg></div>
<div class="t num" style="left:17px;top:494.2px;color:#505050">9</div>
<svg class="star" style="left:15.8px;top:517.1px" width="13" height="11.400" viewBox="0 0 13 11.4"><path d="M7.4,0 L9,3.900 L12.8,4.2 L9.900,6.900 L10.8,11 L7.4,8.8 L4,11 L4.900,6.900 L2,4.2 L5.800,3.900 Z" fill="#5a5a5a"/><path d="M0,3.800h1.800 M.5,6.200h1.800 M0,8.600h1.800" stroke="#5a5a5a" stroke-width=".9"/></svg>
<div class="abs th" style="left:47.4px;top:498.5px"><svg width="58.4" height="32.8" viewBox="0 0 58.3 32.8" style="left:0;top:0;overflow:hidden"><path d="M0,22 Q2,21 3,24 Q6,23 8,26 Q11,25 14,28 Q18,26 22,29 Q27,27 30,29 Q35,26 39,28 Q44,25 48,28 Q52,25 54,27 Q55,23 58.3,21" fill="none" stroke="#d9cfc2" stroke-width=".5"/><path d="M0,27 Q6,25 10,29 Q16,27 20,31 M30,31 Q36,27 42,30 Q48,27 58.3,29" fill="none" stroke="#d9cfc2" stroke-width=".4"/><text x="13.6" y="13.3" font-size="6.4" fill="#3d444d" font-family="Liberation Sans,sans-serif">02</text><rect x="6.9" y="15.3" width="23.9" height="2.8" fill="#4a525c"/><rect x="7.4" y="19.4" width="22" height=".5" fill="#b0b6bc"/><path d="M40,23 Q50,21 58.3,25 L58.3,32.8 L36,32.8 Q38,27 40,23Z" fill="#edf1f4"/><g transform="translate(43.4,16.6) scale(1.0)">
<path d="M-3,3 L-8,6 L-8,7.6 L-2,6.4 Z M3,3 L8,6 L8,7.6 L2,6.4 Z" fill="#434a54"/>
<path d="M0,-9 C3.6,-5 4.6,-1 4.2,3 C3.8,5.6 2.6,7 1.8,7.6 L-1.8,7.6 C-2.6,7 -3.8,5.6 -4.2,3 C-4.6,-1 -3.6,-5 0,-9 Z" fill="#f2f4f6" stroke="#59626b" stroke-width=".5"/>
<path d="M-3.7,-4.6 L3.7,-4.6 C4.7,-1 4.5,2 3.9,4.2 L-3.9,4.2 C-4.5,2 -4.7,-1 -3.7,-4.6 Z" fill="#63b946"/>
<circle cx="0" cy="0" r="2.5" fill="#434a54"/><circle cx="0" cy="0" r="1.5" fill="#eef1f4"/>
<rect x="-.5" y="5.6" width="1" height="3.6" fill="#434a54"/>
</g></svg></div>
<div class="t num" style="left:7px;top:553.2px;color:#505050">10</div>
<div class="abs th" style="left:47.4px;top:557.5px"><svg width="58.4" height="32.8" viewBox="0 0 58.3 32.8" style="left:0;top:0;overflow:hidden"><rect x="2.1" y="2.4" width="14.5" height="1.4" fill="#b9bec4"/><rect x="11.5" y="7.5" width="16.2" height="2.4" fill="#aab0b7"/><rect x="12" y="10.6" width="15" height=".5" fill="#c5cad0"/><path d="M29.7,6.3 L44.8,6.3 L47,8.6 L44.8,10.9 L29.7,10.9 Z" fill="#2f353c"/><rect x="31.6" y="8.1" width="9" height="1" fill="#c5cad0"/></svg></div>
<div class="abs" style="left:131px;top:4px;width:19px;height:563px;background:#dadada"></div>
<div class="abs sbb" style="left:131px;top:5px;width:19px;height:17px"></div><svg style="left:136.5px;top:11.5px" width="9" height="5" viewBox="0 0 9 5"><path d="M0,4.6 L4.5,0 L9,4.6 Z" fill="#606060"/></svg>
<div class="abs sbb" style="left:131px;top:23.5px;width:19px;height:164.5px"></div>
<div class="abs sbb" style="left:131px;top:549px;width:19px;height:17.5px"></div><svg style="left:136.5px;top:556px" width="9" height="5" viewBox="0 0 9 5"><path d="M0,0 L9,0 L4.5,4.6 Z" fill="#606060"/></svg>
</div>

<!-- SLIDE -->
<div id="slidebg" class="abs" style="left:171px;top:250px;width:760.8px;height:430.2px;background:#fff;box-shadow:0 0 0 .6px #d6d6d6"></div>
<div id="slide" class="abs" style="left:171px;top:251px;width:760.6px;height:429px;background:#fff;overflow:hidden">
<svg width="761" height="430" viewBox="171 251 761 430" style="left:0;top:0;overflow:hidden">
  <!-- halo ring -->
  <circle cx="362.8" cy="447.5" r="101.2" fill="none" stroke="#f5f8fb" stroke-width="12.6"/>
  <g stroke="#3f464e" stroke-width="2.2" stroke-linejoin="round" stroke-linecap="round">
    <!-- right gray cloud -->
    <path d="M932,524 A48,48 0 0 0 898,564 A30,30 0 0 1 900,589 A52,52 0 0 0 868,618 L868,683 L932,683 Z" fill="#e9eef2"/>
    <!-- back-left gray cloud -->
    <path d="M170,534 A34,34 0 0 1 194,569 A38,38 0 0 1 235,601 A62,62 0 0 1 308,634 L308,683 L170,683 Z" fill="#e9eef2"/>
    <!-- exhaust plume -->
    <path d="M345,579 Q338,606 321,626 L352,683 L440,683 L428,654 Q392,626 382,579 Z" fill="#e9eef2"/>
    <!-- back white cloud middle-right -->
    <path d="M712,634 A70,70 0 0 1 780,633 A40,40 0 0 1 823,633 A44,44 0 0 1 888,622 L900,683 L712,683 Z" fill="#fbfcfc"/>
    <!-- gray middle cloud -->
    <path d="M600,624 A68,68 0 0 1 701,632 A50,50 0 0 1 739,651 A48,48 0 0 1 804,683 L600,683 Z" fill="#e9eef2"/>
    <!-- gray middle-left cloud -->
    <path d="M424.5,656 Q432,647.3 442.500,647.3 Q452,647.3 459.6,650.4 Q468,641.5 481,640.8 A41,41 0 0 1 542,634.8 L560,683 L424,683 Z" fill="#e9eef2"/>
    <!-- front white lobe center -->
    <path d="M452,683 Q464,668.4 480,668.2 Q490,668.2 498.7,670.6 Q505,662 516,657.6 Q523,654.6 530.5,652.4 Q532.5,642 541.6,634.900 A67,67 0 0 1 620.3,639.2 A60,60 0 0 1 637.7,673.6 Q645,677.4 652,683 Z" fill="#fbfcfc"/>
    <!-- front white cloud left -->
    <path d="M281,683 C278,650 305,622.5 343,622.5 C372,622.5 395,636 405,653 Q416,652 426,657 A52,52 0 0 1 455,683 Z" fill="#fbfcfc"/>
    <!-- front right white cloud -->
    <path d="M810,683 A170,170 0 0 1 932,613 L932,683 Z" fill="#fbfcfc"/>
  </g>
  <!-- wings -->
  <g fill="#434a54">
    <path d="M321,526 L260,554 Q257,556 257,560 L257,572 Q257,576 262,575 L338,559 Z"/>
    <path d="M405,526 L466,554 Q469,556 469,560 L469,572 Q469,576 464,575 L388,559 Z"/>
  </g>
  <g fill="#353b44" opacity=".55">
    <path d="M321,526 L300,536 Q318,548 338,559 Z"/>
    <path d="M405,526 L426,536 Q408,548 388,559 Z"/>
  </g>
  <!-- nozzle -->
  <path d="M340,563 L386,563 L388,579 L338,579 Z" fill="#6cc33f" stroke="#3f464e" stroke-width="1.6" stroke-linejoin="round"/>
  <!-- body -->
  <path id="body" d="M362.5,357.3 Q364.4,357.3 365.5,359 C370.5,367 418.3,402 418.3,467 C418.3,524.5 397,545.5 384.5,564 Q362.5,570 340.5,564 C328,545.5 306.7,524.5 306.7,467 C306.7,402 354.5,367 359.5,359 Q360.6,357.3 362.5,357.3 Z" fill="#fafbfc" stroke="#3f464e" stroke-width="2" stroke-linejoin="round"/>
  <clipPath id="bc"><path d="M362.5,357.3 Q364.4,357.3 365.5,359 C370.5,367 418.3,402 418.3,467 C418.3,524.5 397,545.5 384.5,564 Q362.5,570 340.5,564 C328,545.5 306.7,524.5 306.7,467 C306.7,402 354.5,367 359.5,359 Q360.6,357.3 362.5,357.3 Z"/></clipPath>
  <g clip-path="url(#bc)">
    <path d="M300,357 L363,357 C340,385 336,400 342,412 C330,450 335,520 352,570 L300,570 Z" fill="#e4e9ee"/>
    <path d="M300,414.5 Q362.5,402 426,414.5 L426,520.5 Q362.5,534.5 300,520.5 Z" fill="#6dc540" stroke="#3f464e" stroke-width="2"/>
    <path d="M304,414 Q326,409.4 346,408.6 C322,450 330,500 348,527.4 Q325,526.4 304,521 Z" fill="#52b131"/>
    <path d="M380,522 Q410,500 420,470 L426,470 L426,521 Q400,528 380,528 Z" fill="#5fba38" opacity=".6"/>
  </g>
  <path d="M362.5,357.3 Q364.4,357.3 365.5,359 C370.5,367 418.3,402 418.3,467 C418.3,524.5 397,545.5 384.5,564 Q362.5,570 340.5,564 C328,545.5 306.7,524.5 306.7,467 C306.7,402 354.5,367 359.5,359 Q360.6,357.3 362.5,357.3 Z" fill="none" stroke="#3f464e" stroke-width="2" stroke-linejoin="round"/>
  <!-- porthole -->
  <circle cx="363" cy="472" r="31.5" fill="#434a54"/>
  <circle cx="363" cy="472" r="22" fill="#f4f6f8"/>
  <clipPath id="pc"><circle cx="363" cy="472" r="22"/></clipPath>
  <g clip-path="url(#pc)">
    <path d="M335,470 L365,445 L375,445 L338,480 Z" fill="#dfe5ea"/>
    <path d="M340,490 L385,452 L390,462 L350,498 Z" fill="#dfe5ea"/>
    <path d="M341,472 A22,22 0 0 0 363,494 A26,26 0 0 1 341,472 Z" fill="#d5dce2"/>
  </g>
  <!-- center fin -->
  <path d="M358,545 L368,545 L368,588 Q368,593 363,593 Q358,593 358,588 Z" fill="#434a54"/>
  <!-- rope -->
  <path d="M361,277 C368,280 374,288 382,296 C400,316 440,326 470,340 C500,352 520,372 546,383" fill="none" stroke="#222" stroke-width="1.1"/>
  <!-- man -->
  <g fill="#1c1c1c" stroke="#1c1c1c" stroke-width=".5" stroke-linejoin="round">
    <path d="M360.3,276.0 L355.6,276.8 L350.3,282.1 L347.7,286.8 L349.1,293.3 L349.7,303.3 L348.5,313.3 L351.5,312.1 L351.5,306.2 L360.3,305.1 L360.3,303.3 L357.9,296.2 L356.8,293.3 L355.6,291.5 L352.6,287.4 L353.8,283.3 L357.4,280.0 L361.8,278.6 Z"/>
    <path d="M357.9,288.2 L361.5,288.2 L363.2,290.9 L362.8,294.5 L361.1,296.2 L358.5,296.0 L356.9,293.3 L356.8,290.4 Z"/>
    <path d="M362.3,299.5 L365.8,301.3 L370.3,300.1 L372.4,298.9 L371.7,301.5 L367.0,303.4 L366.5,311.5 L367.4,314.1 L363.2,312.9 L362.1,303.3 L360.3,297.4 Z"/>
    <path d="M351.5,312.1 L359.7,313.9 L367.4,313.9 L371.5,316.2 L375.6,319.8 L373.8,321.6 L370.3,319.3 L366.5,320.0 L365.8,322.8 L363.5,323.5 L363.9,338.6 L363.4,349.2 L365.0,355.1 L362.8,356.0 L360.4,351.8 L359.1,348.2 L359.7,343.3 L357.6,324.7 L355.2,323.3 L352.6,330.4 L349.1,332.1 L346.8,329.2 L349.7,320.9 Z"/>
  </g>
  <!-- green title box -->
  <rect x="546" y="361.2" width="271.8" height="38.3" fill="#6cc33f"/>
  <!-- circles -->
  <circle cx="565.6" cy="556.3" r="14" fill="#fff" stroke="#6cc33f" stroke-width="1.2"/>
  <circle cx="691" cy="554.5" r="15.3" fill="#fff" stroke="#6cc33f" stroke-width="1.2"/>
  <circle cx="761" cy="556.7" r="9.3" fill="#fff" stroke="#3f464e" stroke-width="1.2"/>
  <circle cx="622.3" cy="588.2" r="11" fill="#fff" stroke="#3f464e" stroke-width="1.2"/>
</svg>
<div class="t" style="left:385.4px;top:114.2px;font-size:29.2px;font-weight:700;color:#fff;-webkit-text-stroke:.4px #fff;font-family:'Liberation Sans',sans-serif;transform:scaleX(.89);transform-origin:0 0" id="cp">CAREER PLANNING</div>
<div class="t" style="left:371.5px;top:158px;font-size:51px;font-weight:900;color:#414a54;letter-spacing:6.2px" id="zt">职业生涯规划</div>
<div class="t" style="left:373px;top:217px;font-size:14.4px;font-weight:900;color:#6cba3c;letter-spacing:3.6px;transform:skewX(-9deg);transform-origin:0 100%" id="st">职业化的过程就是自我超越的过程</div>
<div class="t" style="left:372px;top:238px;font-size:11.7px;color:#333;line-height:13.7px;white-space:normal;width:300px;font-family:'Liberation Sans',sans-serif" id="en">Career planning assessment is a process that every<br>employee must experience.</div>
</div>

<!-- RIGHT SCROLLBAR -->
<div class="abs" style="left:946px;top:206px;width:19px;height:456px;background:#dadada"></div>
<div class="abs sbb" style="left:946px;top:206.5px;width:19px;height:18.4px"></div>
<div class="abs sbb" style="left:946px;top:224px;width:19px;height:22px"></div>
<div class="abs sbb" style="left:946px;top:643.4px;width:19px;height:18.4px"></div>
<svg style="left:946px;top:206px" width="19" height="500" viewBox="946 206 19 500">
<path d="M951,218 L955.5,213.4 L960,218 Z M951,650.4 L960,650.4 L955.5,655 Z" fill="#606060"/>
<path d="M951,672.6 L955.5,668 L960,672.6 Z M951,678 L955.5,673.400 L960,678 Z M951,690 L960,690 L955.5,694.6 Z M951,695.4 L960,695.4 L955.5,700 Z" fill="#606060"/>
</svg>
<!-- NOTES SCROLL -->
<div class="abs sbb" style="left:946px;top:735.4px;width:18.4px;height:16.6px"></div>
<div class="abs sbb" style="left:946px;top:751.4px;width:18.4px;height:17px"></div>
<svg style="left:946px;top:735px" width="19" height="17" viewBox="946 735 19 17"><path d="M951,746.400 L955.5,741.8 L960,746.400 Z" fill="#606060"/></svg>
<!-- NOTES -->
<div class="t" style="left:168.800px;top:741.8px;font-size:18.4px;color:#555">单击此处添加备注</div>

<!-- LINES -->
<div class="abs" style="left:154px;top:203px;width:1px;height:568px;background:#c6c6c6"></div>
<div class="abs" style="left:155px;top:203px;width:2px;height:568px;background:#eeeeee"></div>
<div class="abs" style="left:157px;top:730px;width:809px;height:1px;background:#c4c4c4"></div>
<!-- STATUS -->
<div id="status">
<svg width="967" height="28" viewBox="0 771 967 28" style="left:0;top:0">
<rect x="501" y="772" width="49.4" height="27" fill="#d2d0ce"/>
<g fill="none" stroke="#444" stroke-width="1.2" stroke-linejoin="round">
<path d="M210.6,780.6 V791 M210.6,780.6 Q207,778 203,778.8 V791.4 Q207,790.6 210.6,793 M210.6,780.6 Q214,778 218,778.8 V786 M211.4,789.6 L214,792.4 L218.6,787"/>
<path d="M354,782.6 L359.4,777.6 L364.8,782.6 M350,784.4 H369 M350,789.2 H369 M350,794.4 H369"/>
<path d="M426.8,778 H443.8 V789.4 H434.4 L430,793.6 V789.4 H426.8 Z"/>
<rect x="517.6" y="777" width="17.4" height="15.4"/><rect x="524" y="780.6" width="8" height="6"/><path d="M520.8,777 V792.4 M520.8,789.4 H535"/>
<rect x="568.6" y="777.6" width="6" height="5.6"/><rect x="578.4" y="777.6" width="6" height="5.6"/><rect x="568.6" y="786.8" width="6" height="5.6"/><rect x="578.4" y="786.8" width="6" height="5.6"/>
<path d="M625.6,779.4 V792.6 M625.6,779.4 Q622,777.2 617.8,777.8 V791 Q622,790.4 625.6,792.6 M625.6,779.4 Q629.4,777.2 633.6,777.8 V791 Q629.4,790.4 625.6,792.6"/><path d="M620,781.4h3.4M620,784h3.4M620,786.600h3.4M628,781.4h3.4M628,784h3.4M628,786.6h3.4" stroke-width=".8"/>
<path d="M668,777.6 H682 V786.4 H668 Z M666.8,777.6 H683.2 M675,786.4 V792.4 M670.6,792.6 H679.4"/>
<path d="M709.6,785 H717"/>
<path d="M933,781.4 V777 H941.4 V781.4 M933,787.8 V792.2 H941.4 V787.8 M935,779.8 L937.2,777.6 L939.4,779.8 M935,789.4 L937.2,791.6 L939.4,789.4" stroke-width="1"/>
</g>
<path d="M724,785 H900" stroke="#8a8886" stroke-width="1"/>
<rect x="760.4" y="778" width="4.4" height="13.4" fill="#605e5c"/>
</svg>
  <div class="t" style="left:11.4px">幻灯片 第 1 张，共 30 张</div>
  <div class="t" style="left:241px">中文(中国)</div>
  <div class="t" style="left:370.6px">备注</div>
  <div class="t" style="left:446.6px">批注</div>
  <div class="t" style="left:883px;font-size:14.6px">54%</div>
</div>

<!-- WATERMARK -->
<div id="wm" class="abs" style="left:760px;top:740px;width:207px;height:59px">
<svg width="207" height="59" viewBox="760 740 207 59" style="left:0;top:0">
<defs><radialGradient id="glow" cx="50%" cy="45%" r="55%"><stop offset="0" stop-color="#fff" stop-opacity=".85"/><stop offset=".7" stop-color="#f4f6f8" stop-opacity=".7"/><stop offset="1" stop-color="#d5dbe0" stop-opacity=".65"/></radialGradient></defs>
<circle cx="793.7" cy="773.2" r="23.6" fill="url(#glow)" stroke="#d9dde1" stroke-width="1"/>
<path d="M781.6,758.6 Q787.6,755.6 794.4,758.8 L792.4,770.6 Q786.4,768 779.4,771 Z" fill="#e8663a" opacity=".85"/>
<path d="M797,759.8 Q803.6,763 811,759.6 L808.4,771.6 Q802,774.6 795,771.600 Z" fill="#7dbb42" opacity=".85"/>
<path d="M778.800,773.8 Q785.6,770.8 792,773.6 L789.8,785.4 Q783.4,782.6 776.6,785.800 Z" fill="#3c9fe0" opacity=".85"/>
<path d="M794.400,774.6 Q801,777.6 808,774.6 L805.600,786.4 Q798.8,789.6 792.2,786.4 Z" fill="#f7c231" opacity=".85"/>
</svg>
<div class="t" style="left:57.6px;top:9.6px;font-family:'Liberation Serif',serif;font-weight:700;font-size:27px;-webkit-text-stroke:1.9px currentColor;color:#e8753a;transform:scaleX(.86);transform-origin:0 0;opacity:.92"><span>Wi</span><span style="color:#7db843">n</span><span style="color:#3aa0dc">7</span></div>
<div class="t" style="left:114.400px;top:11.6px;font-weight:900;font-size:22px;color:#5d5d5d;letter-spacing:-.4px;opacity:.92">系统之家</div>
<div class="t" style="left:70.400px;top:35.6px;font-family:'Liberation Serif',serif;font-weight:700;font-size:17.4px;color:#3a3a3a;transform:scaleX(.8);transform-origin:0 0;text-shadow:0 0 2px #fff,0 0 2px #fff;opacity:.9" id="www">Www.Winwin7.com</div>
</div>

<!-- FRAME -->
<div class="abs" style="left:0;top:0;width:967px;height:799px;border-left:1px solid #7f7f7f;border-right:1.4px solid #6e6e6e;border-bottom:1.5px solid #8c8c8c;border-radius:8px;pointer-events:none"></div>
</div>
</body>
</html>
